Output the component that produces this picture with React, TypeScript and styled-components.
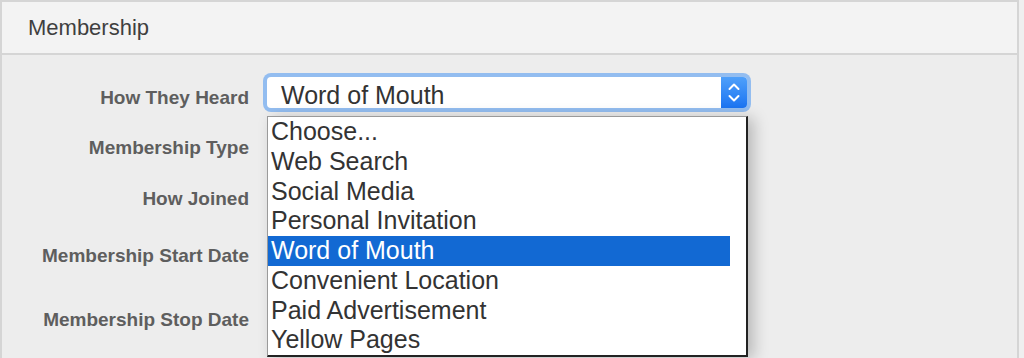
import styled, { createGlobalStyle } from "styled-components"

const GlobalStyle = createGlobalStyle`
  html, body {
    margin: 0;
    padding: 0;
    background: #efefef;
    font-family: "Liberation Sans", Arial, sans-serif;
  }
`

const sources = [
  "Choose...",
  "Web Search",
  "Social Media",
  "Personal Invitation",
  "Word of Mouth",
  "Convenient Location",
  "Paid Advertisement",
  "Yellow Pages",
]

const rows = [
  { label: "How They Heard", height: 50 },
  { label: "Membership Type", height: 50 },
  { label: "How Joined", height: 52 },
  { label: "Membership Start Date", height: 63 },
  { label: "Membership Stop Date", height: 65 },
]

const selected = "Word of Mouth"

const Chevrons = () => (
  <svg width="26" height="31" viewBox="0 0 26 31">
    <path
      d="M8.5 12 L13 7.5 L17.5 12 M8.5 19 L13 23.5 L17.5 19"
      fill="none"
      stroke="#fff"
      strokeWidth="2"
      strokeLinecap="round"
      strokeLinejoin="round"
    />
  </svg>
)

const SourceSelect = () => (
  <SelectWrap>
    <FocusRing>
      <SelectBox>
        <SelectValue>{selected}</SelectValue>
        <Stepper>
          <Chevrons />
        </Stepper>
      </SelectBox>
    </FocusRing>
    <OptionList>
      <Options>
        {sources.map((s) => (
          <Option key={s} $active={s === selected}>
            {s}
          </Option>
        ))}
      </Options>
    </OptionList>
  </SelectWrap>
)

const App = () => {
  return (
    <>
      <GlobalStyle />
      <Panel>
        <PanelHeader>Membership</PanelHeader>
        <PanelBody>
          {rows.map((r, i) => (
            <FormRow key={r.label} $height={r.height}>
              <Label>{r.label}</Label>
              <Field>{i === 0 && <SourceSelect />}</Field>
            </FormRow>
          ))}
        </PanelBody>
      </Panel>
    </>
  )
}

const Panel = styled.div`
  box-sizing: border-box;
  width: 1019px;
  height: 358px;
  border: 2px solid #d5d5d5;
  border-bottom: none;
  display: flex;
  flex-direction: column;
`

const PanelHeader = styled.div`
  box-sizing: border-box;
  height: 53px;
  display: flex;
  align-items: center;
  padding-left: 26px;
  background: #f3f3f3;
  border-bottom: 2px solid #d5d5d5;
  color: #3f3f3f;
  font-size: 22px;
`

const PanelBody = styled.div`
  flex: 1;
  background: #ededed;
  padding-top: 17px;
  display: flex;
  flex-direction: column;
`

const FormRow = styled.div<{ $height: number }>`
  height: ${(p) => p.$height}px;
  display: grid;
  grid-template-columns: 247px 1fr;
  column-gap: 14px;
  align-items: center;
`

const Label = styled.label`
  text-align: right;
  font-size: 19px;
  font-weight: bold;
  color: #5e5e5e;
  line-height: 19px;
`

const Field = styled.div`
  align-self: stretch;
  position: relative;
`

const SelectWrap = styled.div`
  position: relative;
  margin-top: 1px;
  width: 488px;
`

const FocusRing = styled.div`
  padding: 4px;
  border-radius: 8px;
  background: #93bdf0;
`

const SelectBox = styled.div`
  display: flex;
  height: 31px;
  background: #fff;
  border-radius: 4px;
`

const SelectValue = styled.div`
  flex: 1;
  height: 31px;
  overflow: hidden;
  padding-left: 14px;
  font-size: 25px;
  line-height: 36px;
  color: #333;
`

const Stepper = styled.div`
  width: 26px;
  height: 31px;
  border-radius: 0 4px 4px 0;
  background: linear-gradient(#4fa0fa, #1b74f2);
  display: flex;
`

const OptionList = styled.div`
  position: absolute;
  top: 43px;
  left: 4px;
  z-index: 10;
  box-sizing: border-box;
  width: 481px;
  background: #fff;
  border-top: 1px solid #9a9a9a;
  border-left: 1px solid #9a9a9a;
  border-right: 2px solid #222;
  border-bottom: 2px solid #222;
  box-shadow: 6px 2px 14px rgba(0, 0, 0, 0.22);
`

const Options = styled.div`
  margin-right: 16px;
`

const Option = styled.div<{ $active?: boolean }>`
  height: 29.75px;
  line-height: 29.75px;
  padding-left: 3px;
  font-size: 25px;
  white-space: nowrap;
  color: ${(p) => (p.$active ? "#fff" : "#333")};
  background: ${(p) => (p.$active ? "#1269d3" : "transparent")};
`

export default App
